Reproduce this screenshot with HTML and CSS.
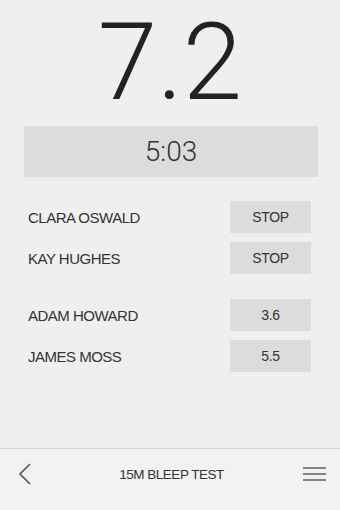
FILE: index.html
```html
<!DOCTYPE html>
<html lang="en">
<head>
    <meta charset="UTF-8">
    <meta name="viewport" content="width=device-width, initial-scale=1.0">
    <title>15M Bleep Test</title>
    <link rel="stylesheet" href="styles.css">
</head>
<body>
    <div class="app">
        <div class="main">
            <div class="level">7.2</div>
            <div class="timer">5:03</div>

            <!-- Runners still going -->
            <div class="group">
                <div class="row">
                    <span class="name">CLARA OSWALD</span>
                    <button class="action">STOP</button>
                </div>
                <div class="row">
                    <span class="name">KAY HUGHES</span>
                    <button class="action">STOP</button>
                </div>
            </div>

            <!-- Runners finished -->
            <div class="group">
                <div class="row">
                    <span class="name">ADAM HOWARD</span>
                    <span class="action">3.6</span>
                </div>
                <div class="row">
                    <span class="name">JAMES MOSS</span>
                    <span class="action">5.5</span>
                </div>
            </div>
        </div>

        <div class="toolbar">
            <div class="toolbar-inner">
                <button class="icon-btn" aria-label="Back">
                    <svg width="16" height="22" viewBox="0 0 16 22">
                        <polyline points="13,1 3,11 13,21" fill="none" stroke="#555" stroke-width="1.6"/>
                    </svg>
                </button>
                <span class="title">15M BLEEP TEST</span>
                <button class="icon-btn" aria-label="Menu">
                    <svg width="23" height="14" viewBox="0 0 23 14">
                        <line x1="0" y1="1" x2="23" y2="1" stroke="#555" stroke-width="1.4"/>
                        <line x1="0" y1="7" x2="23" y2="7" stroke="#555" stroke-width="1.4"/>
                        <line x1="0" y1="13" x2="23" y2="13" stroke="#555" stroke-width="1.4"/>
                    </svg>
                </button>
            </div>
        </div>
    </div>
</body>
</html>
```

FILE: styles.css
```css
body {
    margin: 0;
    padding: 0;
    background-color: #efefef;
    font-family: "Liberation Sans", Arial, sans-serif;
    color: #333;
}

.app {
    display: flex;
    flex-direction: column;
    height: 510px;
}

.main {
    flex: 1;
}

.level {
    padding-top: 9px;
    font-family: Roboto, sans-serif;
    font-weight: 300;
    font-size: 107px;
    line-height: 107px;
    text-align: center;
    color: #222;
}

.timer {
    margin: 10px 22px 0 24px;
    height: 51px;
    line-height: 51px;
    background-color: #dcdcdc;
    text-align: center;
    font-family: Roboto, sans-serif;
    font-weight: 300;
    font-size: 28px;
    color: #333;
}

.group {
    display: flex;
    flex-direction: column;
    gap: 9px;
    padding: 0 29px 0 28px;
    margin-top: 24px;
}

.group + .group {
    margin-top: 25px;
}

.row {
    display: flex;
    justify-content: space-between;
    align-items: center;
    height: 32px;
}

.name {
    font-size: 15px;
    letter-spacing: -0.5px;
    color: #333;
}

button {
    all: unset;
}

.action {
    width: 81px;
    height: 32px;
    line-height: 32px;
    background-color: #dcdcdc;
    text-align: center;
    font-size: 14px;
    letter-spacing: -0.4px;
    color: #333;
}

/* Bottom bar */
.toolbar {
    height: 61px;
    border-top: 1px solid #d4d4d4;
    background-color: #f2f2f2;
}

.toolbar-inner {
    display: flex;
    justify-content: space-between;
    align-items: center;
    height: 50px;
    padding: 0 14px 0 17px;
}

.icon-btn {
    display: flex;
    align-items: center;
    width: 23px;
}

.title {
    font-size: 13.5px;
    letter-spacing: -0.5px;
    color: #333;
}
```
